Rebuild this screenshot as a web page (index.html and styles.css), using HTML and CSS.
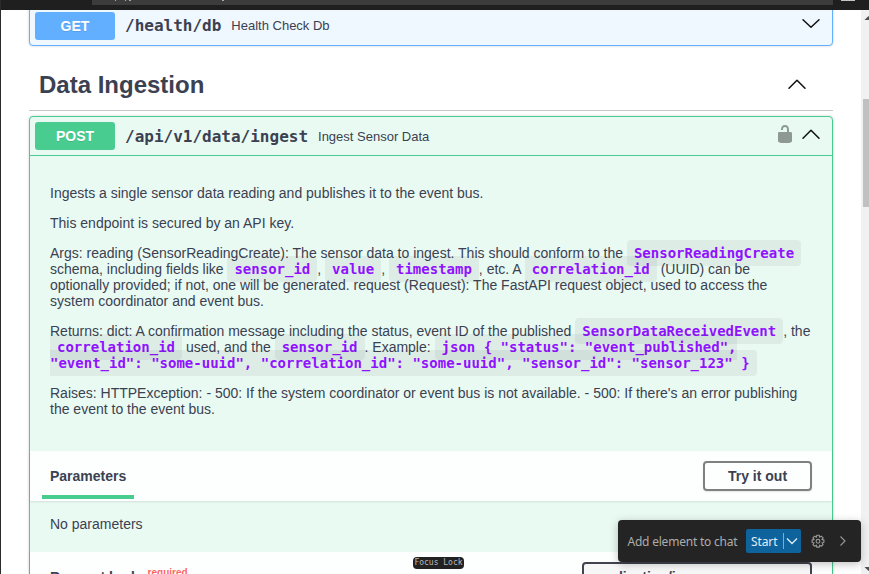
FILE: index.html
```html
<!DOCTYPE html>
<html lang="en">
<head>
<meta charset="utf-8">
<title>API documentation</title>
<link rel="stylesheet" href="styles.css">
</head>
<body>
<div class="window">
  <header class="topbar">
    <div class="address"><svg width="741" height="5" viewBox="0 0 741 5"><path d="M23 0h1M33 0h1M37 0h2M130 0h2" stroke="#aaa" stroke-width="2"/></svg></div>
    <span class="tool"></span>
  </header>
  <div class="viewport">
    <main class="docs">
      <section class="block get">
        <div class="summary">
          <span class="method">GET</span><span class="path">/health/db</span><span class="desc">Health Check Db</span>
          <svg class="chev" width="20" height="20" viewBox="0 0 20 20"><path d="M2 5.7 10 13.3 18 5.7"/></svg>
        </div>
      </section>
      <h2 class="tag"><span>Data Ingestion</span><svg class="chev" width="20" height="20" viewBox="0 0 20 20"><path d="M2 14.3 10 6.2 18 14.3"/></svg></h2>
      <section class="block post">
        <div class="summary">
          <span class="method">POST</span><span class="path">/api/v1/data/ingest</span><span class="desc">Ingest Sensor Data</span>
          <svg class="lock" width="20" height="20" viewBox="0 0 20 20"><path d="M15.8 8H14V5.6C14 2.703 12.665 1 10 1 7.334 1 6 2.703 6 5.6V6h2v-.801C8 3.754 8.797 3 10 3c1.203 0 2 .754 2 2.199V8H4c-.553 0-1 .646-1 1.199V17c0 .549.428 1.139.951 1.307l1.197.387C5.672 18.861 6.55 19 7.1 19h5.8c.549 0 1.428-.139 1.951-.307l1.196-.387c.524-.167.953-.757.953-1.306V9.199C17 8.646 16.352 8 15.8 8z"/></svg>
          <svg class="chev" width="20" height="20" viewBox="0 0 20 20"><path d="M2 14.3 10 6.2 18 14.3"/></svg>
        </div>
        <div class="description">
          <p>Ingests a single sensor data reading and publishes it to the event bus.</p>
          <p>This endpoint is secured by an API key.</p>
          <p>Args: reading (SensorReadingCreate): The sensor data to ingest. This should conform to the <code>SensorReadingCreate</code> schema, including fields like <code>sensor_id</code>, <code>value</code>, <code>timestamp</code>, etc. A <code>correlation_id</code> (UUID) can be optionally provided; if not, one will be generated. request (Request): The FastAPI request object, used to access the system coordinator and event bus.</p>
          <p>Returns: dict: A confirmation message including the status, event ID of the published <code>SensorDataReceivedEvent</code>, the <code>correlation_id</code> used, and the <code>sensor_id</code>. Example: <code>json { "status": "event_published", "event_id": "some-uuid", "correlation_id": "some-uuid", "sensor_id": "sensor_123" }</code></p>
          <p>Raises: HTTPException: - 500: If the system coordinator or event bus is not available. - 500: If there's an error publishing the event to the event bus.</p>
        </div>
        <div class="section-header">
          <h4 class="tab">Parameters</h4>
          <button class="try">Try it out</button>
        </div>
        <div class="empty">No parameters</div>
        <div class="section-header body-header">
          <h4>Request body<span class="required">required</span></h4>
          <div class="select">application/json</div>
        </div>
      </section>
    </main>
    <div class="scrollbar"><svg width="8" height="15" viewBox="0 0 8 15"><path d="M3.5 10 7.5 6 11.5 10z"/></svg><div class="thumb"></div><svg width="8" height="15" viewBox="0 0 8 15"><path d="M3.5 8 7.5 12 11.5 8z"/></svg></div>
  </div>
  <div class="focus">Focus Lock</div>
  <div class="toolbar">
    <span class="label">Add element to chat</span>
    <div class="start"><span>Start</span><i></i><svg width="12" height="12" viewBox="0 0 12 12"><path d="M1 3.5 6 8.5 11 3.5"/></svg></div>
    <svg class="gear" width="16" height="16" viewBox="0 0 16 16"><path d="M6.700 1.300h2.600l.3 2 1.700-1.200 1.800 1.800-1.200 1.700 2 .3v2.600l-2 .3 1.200 1.700-1.800 1.800-1.700-1.200-.3 2H6.700l-.3-2-1.700 1.200-1.800-1.800 1.200-1.700-2-.3V5.900l2-.3-1.200-1.700 1.800-1.800 1.700 1.200z"/><circle cx="8" cy="7.300" r="1.900"/></svg>
    <svg class="next" width="10" height="12" viewBox="0 0 10 12"><path d="M2.500 1.500 7 6 2.500 10.500"/></svg>
  </div>
</div>
</body>
</html>
```

FILE: styles.css
```css
* { box-sizing: border-box; }
body { margin: 0; background: #fff; color: #3b4151; font-family: "Liberation Sans", Arial, sans-serif; }
.window { position: relative; height: 574px; overflow: hidden; border-left: 1px solid #2b2b2b; display: flex; flex-direction: column; }
.topbar { flex: none; height: 10px; background: #1f1f1f; display: flex; margin-left: -1px; padding-left: 92px; }
.address { width: 741px; height: 5px; background: #3c3c3c; }
.address svg { display: block; }
.tool { width: 14px; height: 1px; margin-left: 8px; background: #c5c5c5; }
.viewport { flex: 1; min-height: 0; overflow: hidden; display: flex; justify-content: space-between; }
.docs { width: 804px; margin-left: 28px; margin-top: -4px; }
.block { border: 1px solid; border-radius: 4px; box-shadow: 0 0 3px rgba(0,0,0,.19); }
.get { border-color: #61affe; background: #eff7ff; }
.post { border-color: #49cc90; background: #e9faf3; margin-top: 5px; height: 520px; }
.summary { display: flex; align-items: center; padding: 5px 11px 5px 5px; height: 38px; }
.get .path, .get .desc { margin-top: -2px; }
.post .summary { height: 39px; border-bottom: 1px solid #49cc90; }
.method { width: 80px; height: 28px; line-height: 28px; border-radius: 3px; color: #fff; background: #61affe; font-size: 14px; font-weight: 700; text-align: center; text-shadow: 0 1px 0 rgba(0,0,0,.1); }
.post .method { background: #49cc90; }
.path { font: 600 16px "DejaVu Sans Mono", monospace; padding: 0 10px; }
.desc { font-size: 13px; flex: 1; }
.chev { fill: none; stroke: #111; stroke-width: 1.5; stroke-linecap: round; stroke-linejoin: round; }
.summary .chev { margin-top: -4px; }
.lock { fill: #8f9994; margin: -4px 6px 0 0; }
.tag { margin: 0; height: 65px; padding: 13px 26px 0 10px; border-bottom: 1px solid #c4c6ca; display: flex; align-items: center; justify-content: space-between; font-size: 24px; }
.tag .chev { margin-top: -2px; }
.description { height: 295px; padding: 29px 20px 0; }
p { margin: 0 0 14px; font-size: 14px; line-height: 16px; }
code { font: 600 14px/16px "DejaVu Sans Mono", monospace; color: #9012fe; background: rgba(0,0,0,.05); border-radius: 4px; padding: 5px 7px; }
.section-header { height: 50px; display: flex; align-items: center; justify-content: space-between; padding: 0 20px 0 12px; background: rgba(255,255,255,.87); box-shadow: 0 1px 2px rgba(0,0,0,.1); }
h4 { margin: 0; font-size: 14px; }
.tab { width: 92px; height: 48px; line-height: 50px; padding-left: 8px; border-bottom: 4px solid #49cc90; align-self: flex-start; }
.try { width: 109px; height: 30px; border: 2px solid #808080; border-radius: 4px; background: transparent; color: #3b4151; font: 700 14px "Liberation Sans", sans-serif; padding: 0; box-shadow: 0 1px 2px rgba(0,0,0,.1); }
.empty { height: 51px; padding: 15px 20px; font-size: 14px; line-height: 16px; }
.body-header { padding-left: 20px; }
.body-header h4 { display: flex; line-height: 16px; }
.required { color: #f66; font-size: 10px; line-height: 10px; margin: -1px 0 0 5px; }
.select { width: 230px; height: 31px; border: 2px solid #41444e; border-radius: 4px; background: #f7f7f7; padding: 5px 10px; font-size: 14px; font-weight: 700; }
.scrollbar { width: 8px; background: #f1f1f1; display: flex; flex-direction: column; justify-content: space-between; }
.scrollbar svg { fill: #505050; }
.thumb { height: 108px; margin: 74px 0 auto 2px; background: #c1c1c1; }
.focus { position: absolute; left: 412px; top: 557px; width: 51px; height: 12px; border-radius: 4px; background: #222; color: #bbb; font: 8px/11px "DejaVu Sans Mono", monospace; text-align: center; }
.toolbar { position: absolute; left: 617px; top: 520px; width: 243px; height: 42px; border-radius: 4px; background: #242424; color: #adadad; box-shadow: 0 2px 8px rgba(0,0,0,.25); display: flex; align-items: center; padding-left: 10px; font: 12px "Noto Sans", sans-serif; }
.label { width: 118px; white-space: nowrap; letter-spacing: -.22px; margin-left: -.5px; margin-right: .5px; }
.start { width: 55px; height: 24px; border-radius: 2px; background: #0e639c; color: #e3eef5; display: flex; align-items: center; padding-left: 5px; }
.start span { width: 32px; letter-spacing: -.1px; }
.start i { width: 1px; height: 16px; background: #7faccb; margin-right: 2px; }
.toolbar svg { fill: none; stroke: #999; stroke-width: 1.1; flex: none; }
.toolbar .start svg { stroke: #e3eef5; stroke-width: 1.3; }
.toolbar .gear { margin: 1px 0 0 9px; stroke-linejoin: round; }
.next { margin-left: 12px; }
```
